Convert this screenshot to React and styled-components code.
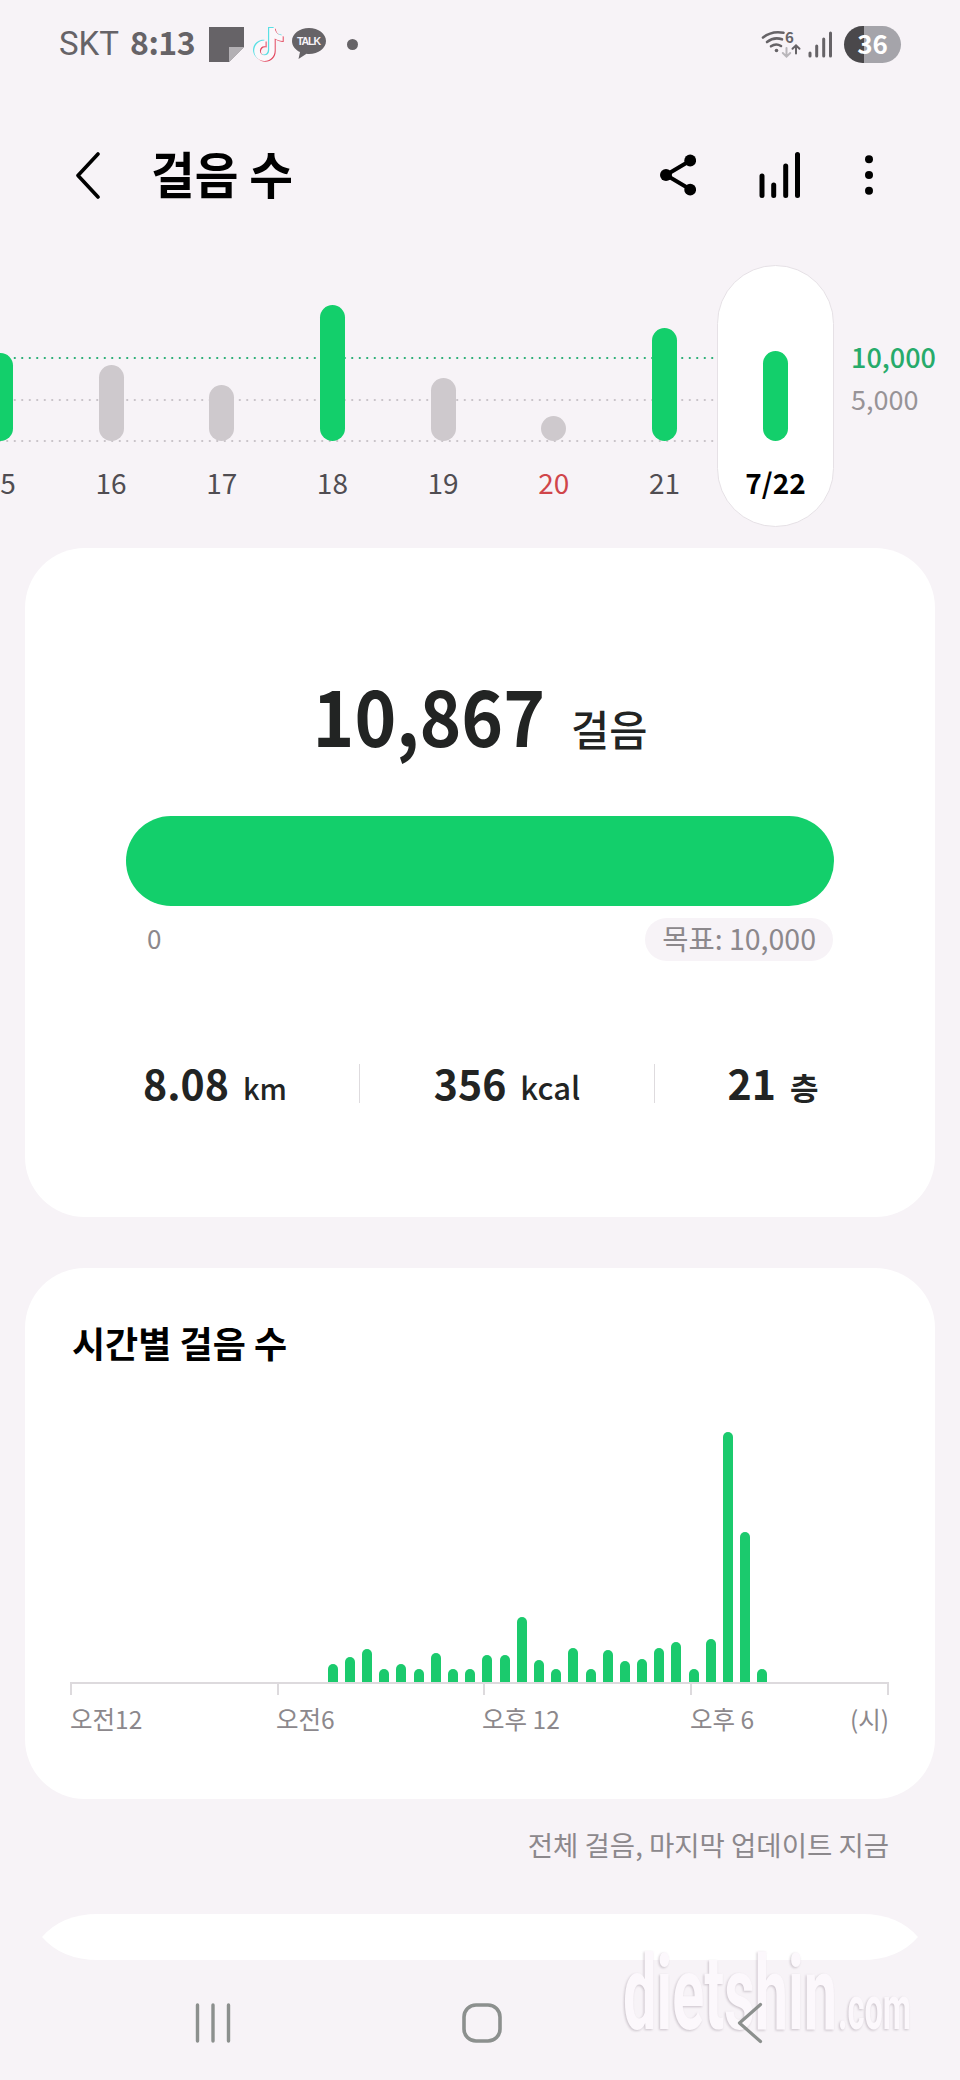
import React from "react";
import styled, { createGlobalStyle } from "styled-components";

const days = [
  { label: "15", height: 88, done: true },
  { label: "16", height: 76 },
  { label: "17", height: 56 },
  { label: "18", height: 136, done: true },
  { label: "19", height: 63 },
  { label: "20", height: 25, holiday: true },
  { label: "21", height: 113, done: true },
];

const halfHours = [
  18, 25, 33, 13, 18, 13, 29, 13, 13, 27, 27, 65, 22, 13, 34, 13, 32, 21, 23,
  34, 40, 13, 43, 250, 150, 13,
];

export default function App() {
  return (
    <>
      <GlobalStyle />
      <Screen>
        <StatusBar>
          <Carrier>SKT</Carrier>
          <Clock>8:13</Clock>
          <NoteIcon />
          <TikTokIcon />
          <TalkIcon />
          <MoreDot />
          <StatusRight>
            <WifiIcon />
            <SignalIcon />
            <Battery>36</Battery>
          </StatusRight>
        </StatusBar>

        <AppBar>
          <BackIcon />
          <Title>걸음 수</Title>
          <Actions>
            <ShareIcon />
            <ChartIcon />
            <MenuIcon />
          </Actions>
        </AppBar>

        <DayChart>
          <Track>
            <Days>
              {days.map((day) => (
                <Day key={day.label}>
                  <DayBar $height={day.height} $done={day.done} />
                  <DayLabel $holiday={day.holiday}>{day.label}</DayLabel>
                </Day>
              ))}
            </Days>
          </Track>
          <Today>
            <DayBar $height={90} $done />
            <TodayLabel>7/22</TodayLabel>
          </Today>
          <Scale>
            <ScaleLabel $goal>10,000</ScaleLabel>
            <ScaleLabel>5,000</ScaleLabel>
          </Scale>
        </DayChart>

        <SummaryCard>
          <Total>
            <TotalNumber>10,867</TotalNumber>
            <TotalUnit>걸음</TotalUnit>
          </Total>
          <Progress />
          <Range>
            <Zero>0</Zero>
            <Goal>목표: 10,000</Goal>
          </Range>
          <Stats>
            <Stat $width={233} $inset={55}>
              <StatValue>8.08</StatValue>
              <StatUnit>km</StatUnit>
            </Stat>
            <Stat $width={295}>
              <StatValue>356</StatValue>
              <StatUnit $size={31}>kcal</StatUnit>
            </Stat>
            <Stat $width={237}>
              <StatValue>21</StatValue>
              <StatUnit $size={31} $bold>
                층
              </StatUnit>
            </Stat>
          </Stats>
        </SummaryCard>

        <HourlyCard>
          <CardTitle>시간별 걸음 수</CardTitle>
          <HourPlot>
            {halfHours.map((height, i) => (
              <HourBar key={i} $height={height} />
            ))}
          </HourPlot>
          <Axis>
            <Tick />
            <Tick />
            <Tick />
            <Tick $last />
          </Axis>
          <AxisLabels>
            <span>오전12</span>
            <span>오전6</span>
            <span>오후 12</span>
            <span>오후 6</span>
            <span>(시)</span>
          </AxisLabels>
        </HourlyCard>

        <Updated>전체 걸음, 마지막 업데이트 지금</Updated>
        <NextCard />

        <NavBar>
          <RecentsIcon />
          <HomeIcon />
          <NavBackIcon />
        </NavBar>
        <Watermark />
      </Screen>
    </>
  );
}

const NoteIcon = () => (
  <NoteSvg viewBox="0 0 35 35">
    <path d="M0 0h35v20L20 35H0z" fill="#666367" />
    <path d="M20 20h15L20 35z" fill="#b3b0b4" />
  </NoteSvg>
);

const noteShape =
  "M16 1h5.500c.6 4.400 3.400 7.200 8 7.600v5.600c-3 0-5.700-.9-8-2.500v11.800c0 6-4.600 10.500-10.300 10.500S1 29.500 1 23.800s5-10.700 11.400-10.100v5.900c-3.100-.9-5.700 1.300-5.700 4.200 0 2.700 2 4.600 4.600 4.600 2.800 0 4.700-1.900 4.700-5z";

const TikTokIcon = () => (
  <TikTokSvg viewBox="0 0 32 36">
    <path d={noteShape} fill="#59dfe4" />
    <path d={noteShape} fill="#e3485f" transform="translate(2.200 1.800)" />
    <path d={noteShape} fill="#fbf8fb" transform="translate(1.200 .9)" />
  </TikTokSvg>
);

const TalkIcon = () => (
  <TalkSvg viewBox="0 0 34 32">
    <path
      d="M17 0C7.600 0 0 5.800 0 13c0 4.700 3.200 8.800 8 11.100L6.500 31l8-5.200c.8.100 1.700.2 2.500.2 9.400 0 17-5.800 17-13S26.400 0 17 0z"
      fill="#666367"
    />
    <text x="17" y="17.200" textAnchor="middle" textLength="24">
      TALK
    </text>
  </TalkSvg>
);

const WifiIcon = () => (
  <WifiSvg viewBox="0 0 40 28">
    <g fill="none" stroke="#666367" strokeWidth="2.600" strokeLinecap="round">
      <path d="M2 7.500Q11 .5 22.500 2.800" />
      <path d="M6 12Q13 6.500 21 9.300" />
      <path d="M10 16.300q5-3.500 10-.3" />
      <path d="M35 23.500v-8m-3.500 3.300L35 15.300l3.500 3.500" strokeWidth="2" />
      <path
        d="M25.500 18v8.500m-3.700-3.500l3.700 3.700 3.700-3.700"
        stroke="#b9b6ba"
        strokeWidth="2"
      />
    </g>
    <circle cx="15.500" cy="20.500" r="1.800" fill="#666367" />
    <text x="24" y="12.500">
      6
    </text>
  </WifiSvg>
);

const SignalIcon = () => (
  <SignalSvg viewBox="0 0 25 27">
    <path
      d="M2 22v3M8.700 15v10M15.700 8v17M22.500 2v23"
      stroke="#666367"
      strokeWidth="3"
      strokeLinecap="round"
    />
  </SignalSvg>
);

const BackIcon = () => (
  <BackSvg viewBox="0 0 28 48">
    <path
      d="M24 3L4 24.500 24 46"
      fill="none"
      stroke="#000"
      strokeWidth="3.600"
      strokeLinecap="round"
      strokeLinejoin="round"
    />
  </BackSvg>
);

const ShareIcon = () => (
  <ShareSvg viewBox="0 0 36 42">
    <path d="M30.500 6.500L6 21l24.500 14.500" fill="none" stroke="#000" strokeWidth="4" />
    <circle cx="6" cy="21" r="6" />
    <circle cx="30.200" cy="6.500" r="5.900" />
    <circle cx="30.200" cy="35.700" r="5.900" />
  </ShareSvg>
);

const ChartIcon = () => (
  <ChartSvg viewBox="0 0 42 46">
    <path
      d="M3 24v19.500M14.700 33v10.500M26.700 14v29.500M38.500 2.500v41"
      stroke="#000"
      strokeWidth="5"
      strokeLinecap="round"
    />
  </ChartSvg>
);

const MenuIcon = () => (
  <MenuSvg viewBox="0 0 8 40">
    <circle cx="4" cy="4.300" r="4" />
    <circle cx="4" cy="20" r="4" />
    <circle cx="4" cy="35.700" r="4" />
  </MenuSvg>
);

const RecentsIcon = () => (
  <RecentsSvg viewBox="0 0 36 40">
    <path
      d="M2.500 2v36M18 2v36M33.500 2v36"
      stroke="#8c908e"
      strokeWidth="3.400"
      strokeLinecap="round"
    />
  </RecentsSvg>
);

const HomeIcon = () => (
  <HomeSvg viewBox="0 0 40 40">
    <rect
      x="2"
      y="2"
      width="36"
      height="36"
      rx="12"
      fill="none"
      stroke="#8c908e"
      strokeWidth="3.600"
    />
  </HomeSvg>
);

const NavBackIcon = () => (
  <NavBackSvg viewBox="0 0 26 42">
    <path
      d="M23.500 2.500L2.500 21l21 18.500"
      fill="none"
      stroke="#8c908e"
      strokeWidth="3.200"
      strokeLinecap="round"
      strokeLinejoin="round"
    />
  </NavBackSvg>
);

const Watermark = () => (
  <WatermarkSvg viewBox="0 0 300 100">
    <text x="3" y="88" fontSize="103" textLength="214" lengthAdjust="spacingAndGlyphs">
      dietshin
    </text>
    <text x="218" y="88" fontSize="62" textLength="73" lengthAdjust="spacingAndGlyphs">
      .com
    </text>
  </WatermarkSvg>
);

const GlobalStyle = createGlobalStyle`
  * {
    box-sizing: border-box;
  }

  body {
    margin: 0;
    background: #f7f3f7;
    font-family: "Noto Sans CJK KR", "Noto Sans", sans-serif;
  }

  svg {
    display: block;
    flex-shrink: 0;
  }
`;

const Screen = styled.main`
  position: relative;
  display: flex;
  flex-direction: column;
  width: 960px;
  height: 2080px;
  overflow: hidden;
  background: #f7f3f7;
`;

const StatusBar = styled.header`
  display: flex;
  align-items: center;
  height: 88px;
  padding: 0 59px 0 59px;
  color: #666367;
`;

const Carrier = styled.span`
  width: 71px;
  font-family: Roboto, sans-serif;
  font-size: 33px;
  line-height: 40px;
`;

const Clock = styled.span`
  width: 79px;
  font-size: 32px;
  font-weight: 700;
  line-height: 40px;
  letter-spacing: -0.5px;
  transform: translateY(-3px);
`;

const NoteSvg = styled.svg`
  width: 35px;
  height: 35px;
`;

const TikTokSvg = styled.svg`
  width: 32px;
  height: 36px;
  margin-left: 8px;
`;

const TalkSvg = styled.svg`
  width: 34px;
  height: 32px;
  margin-left: 8px;

  text {
    font-family: "Liberation Sans", sans-serif;
    font-size: 10.5px;
    font-weight: 700;
    fill: #f7f3f7;
  }
`;

const MoreDot = styled.span`
  width: 11px;
  height: 11px;
  margin-left: 21px;
  border-radius: 50%;
  background: #666367;
`;

const StatusRight = styled.div`
  display: flex;
  align-items: center;
  margin-left: auto;
`;

const WifiSvg = styled.svg`
  width: 40px;
  height: 28px;
  overflow: visible;

  text {
    font-family: "Noto Sans CJK KR", sans-serif;
    font-size: 15px;
    font-weight: 700;
    fill: #666367;
  }
`;

const SignalSvg = styled.svg`
  width: 25px;
  height: 27px;
  margin-left: 7px;
`;

const Battery = styled.span`
  width: 57px;
  height: 37px;
  margin-left: 11px;
  border-radius: 19px;
  background: linear-gradient(90deg, #4a484b 20px, #a5a4aa 20px);
  color: #fff;
  font-size: 26px;
  font-weight: 700;
  line-height: 34px;
  text-align: center;
`;

const AppBar = styled.div`
  display: flex;
  align-items: center;
  height: 174px;
  padding: 0 87px 0 74px;
`;

const BackSvg = styled.svg`
  width: 28px;
  height: 48px;
`;

const Title = styled.h1`
  margin: 0 0 0 49px;
  font-size: 47.5px;
  font-weight: 700;
  line-height: 60px;
  transform: translateY(-2px) scaleY(1.05);
`;

const Actions = styled.div`
  display: flex;
  align-items: center;
  margin-left: auto;
`;

const ShareSvg = styled.svg`
  width: 36px;
  height: 42px;
`;

const ChartSvg = styled.svg`
  width: 42px;
  height: 46px;
  margin-left: 63px;
`;

const MenuSvg = styled.svg`
  width: 8px;
  height: 40px;
  margin-left: 64px;
`;

const DayChart = styled.section`
  display: flex;
  height: 286px;
  padding-top: 3px;
`;

/* goal, half and zero lines are dotted along the full track */
const Track = styled.div`
  width: 717px;
  height: 261px;
  overflow: hidden;
  background-image: radial-gradient(circle, #2fb078 1px, transparent 1.5px),
    radial-gradient(circle, #c9c4c9 1px, transparent 1.5px),
    radial-gradient(circle, #c9c4c9 1px, transparent 1.5px);
  background-size: 7.5px 4px;
  background-position: 3.5px 91px, 3.5px 133px, 3.5px 174px;
  background-repeat: repeat-x;
`;

const Days = styled.div`
  display: flex;
  width: 776px;
  margin-left: -55px;
`;

const Day = styled.div`
  display: flex;
  flex-direction: column;
  align-items: center;
  justify-content: flex-end;
  width: 110.7px;
  height: 261px;
  padding-bottom: 24px;
`;

const DayBar = styled.div`
  width: 25px;
  height: ${(props) => props.$height}px;
  border-radius: 13px;
  background: ${(props) => (props.$done ? "#13cf6b" : "#cec9cd")};
`;

const DayLabel = styled.span`
  height: 40px;
  margin-top: 21px;
  color: ${(props) => (props.$holiday ? "#d0454a" : "#504d52")};
  font-size: 28px;
  line-height: 40px;
`;

const Today = styled.div`
  display: flex;
  flex-direction: column;
  align-items: center;
  justify-content: flex-end;
  width: 117px;
  height: 262px;
  padding-bottom: 24px;
  border: 1px solid #e6e1e6;
  border-radius: 59px;
  background: #fff;
`;

const TodayLabel = styled(DayLabel)`
  color: #000;
  font-weight: 700;
`;

const Scale = styled.div`
  padding: 71px 0 0 17px;
`;

const ScaleLabel = styled.div`
  height: 42px;
  color: ${(props) => (props.$goal ? "#27ab6b" : "#979397")};
  font-size: 27px;
  font-weight: ${(props) => (props.$goal ? 500 : 400)};
  line-height: 42px;
`;

const Card = styled.section`
  width: 910px;
  margin: 0 auto;
  border-radius: 60px;
  background: #fff;
`;

const SummaryCard = styled(Card)`
  height: 669px;
  padding: 120px 101px 0;
`;

const Total = styled.div`
  display: flex;
  align-items: baseline;
  justify-content: center;
  gap: 26px;
  height: 148px;
  color: #222423;
  line-height: 90px;
`;

const TotalNumber = styled.span`
  font-size: 71px;
  font-weight: 700;
  transform: scaleY(1.1);
`;

const TotalUnit = styled.span`
  font-size: 41.5px;
  font-weight: 500;
  transform: translateY(2px);
`;

const Progress = styled.div`
  height: 90px;
  border-radius: 45px;
  background: #13cf6b;
`;

const Range = styled.div`
  display: flex;
  align-items: center;
  justify-content: space-between;
  height: 43px;
  margin: 12px 1px 0 21px;
  color: #8c888c;
`;

const Zero = styled.span`
  font-size: 26px;
  line-height: 40px;
  transform: translateY(-2px);
`;

const Goal = styled.span`
  height: 43px;
  padding: 0 17px;
  border-radius: 22px;
  background: #f7f3f7;
  font-size: 28.5px;
  line-height: 40px;
`;

const Stats = styled.div`
  display: flex;
  height: 39px;
  margin: 103px -60px 0 0;
`;

const Stat = styled.div`
  display: flex;
  flex: none;
  align-items: baseline;
  justify-content: center;
  gap: 14px;
  width: ${(props) => props.$width}px;
  padding-right: ${(props) => props.$inset || 0}px;
  color: #222423;
  line-height: 36px;

  & + & {
    border-left: 1px solid #dedbde;
  }
`;

const StatValue = styled.span`
  font-size: 41px;
  font-weight: 700;
`;

const StatUnit = styled.span`
  font-size: ${(props) => props.$size || 29}px;
  font-weight: ${(props) => (props.$bold ? 700 : 500)};
`;

const HourlyCard = styled(Card)`
  height: 531px;
  margin-top: 51px;
  padding: 51px 46px 0 45px;
`;

const CardTitle = styled.h2`
  margin: 0 0 0 2px;
  font-size: 36px;
  font-weight: 700;
  line-height: 46px;
`;

const HourPlot = styled.div`
  display: flex;
  align-items: flex-end;
  gap: 7.2px;
  height: 317px;
  padding-left: 257.7px;
`;

const HourBar = styled.div`
  flex: none;
  width: 10px;
  height: ${(props) => props.$height}px;
  border-radius: 5px 5px 0 0;
  background: #1bca6d;
`;

const Axis = styled.div`
  display: flex;
  height: 13px;
  border-top: 2px solid #dddadd;
`;

const Tick = styled.div`
  width: ${(props) => (props.$last ? "auto" : "206.7px")};
  flex: ${(props) => (props.$last ? 1 : "none")};
  border-left: 2px solid #dddadd;
  border-right: ${(props) => (props.$last ? "2px solid #dddadd" : "none")};
`;

const AxisLabels = styled.div`
  display: grid;
  grid-template-columns: 206px 206px 208px 1fr auto;
  margin-top: 6px;
  color: #8c888c;
  font-size: 24.5px;
  line-height: 36px;
  white-space: nowrap;
`;

const Updated = styled.p`
  margin: 25px 71px 0 0;
  color: #8c888c;
  font-size: 27.5px;
  line-height: 40px;
  text-align: right;
`;

const NextCard = styled.div`
  width: 876px;
  height: 46px;
  margin: 50px auto 0;
  background: #fff;
  clip-path: path(
    "M0 23Q20 0 56 0H820Q856 0 876 23Q856 46 820 46H56Q20 46 0 23Z"
  );
`;

const NavBar = styled.nav`
  position: relative;
  z-index: 1;
  display: flex;
  align-items: center;
  height: 120px;
  padding: 6px 0 0 195px;
`;

const RecentsSvg = styled.svg`
  width: 36px;
  height: 40px;
`;

const HomeSvg = styled.svg`
  width: 40px;
  height: 40px;
  margin-left: 231px;
`;

const NavBackSvg = styled.svg`
  width: 26px;
  height: 42px;
  margin-left: 235px;
`;

/* embossed site mark, under the navigation icons */
const WatermarkSvg = styled.svg`
  position: absolute;
  right: 40px;
  bottom: 39px;
  width: 300px;
  height: 100px;
  overflow: visible;
  filter: drop-shadow(-1px 1px 1px rgba(120, 105, 120, 0.35));

  text {
    font-family: Roboto, sans-serif;
    font-weight: 700;
    fill: #fcf8fc;
  }
`;
